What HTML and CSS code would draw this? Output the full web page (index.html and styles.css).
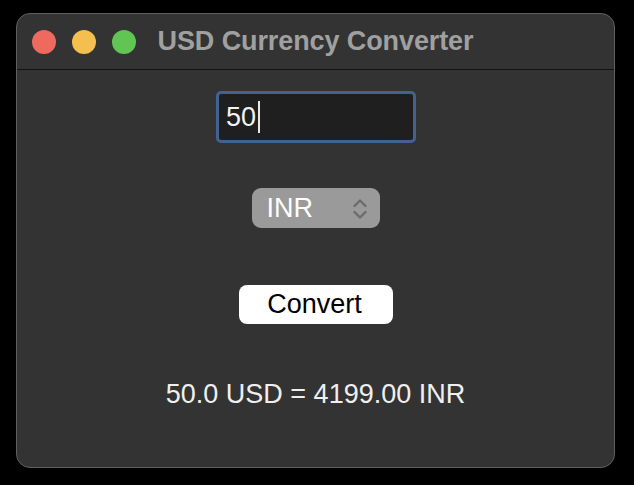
FILE: index.html
```html
<!DOCTYPE html>
<html lang="en">
<head>
<meta charset="utf-8">
<title>USD Currency Converter</title>
<link rel="stylesheet" href="styles.css">
</head>
<body>
<div class="window">
  <div class="titlebar">
    <div class="lights">
      <span class="light red"></span>
      <span class="light yellow"></span>
      <span class="light green"></span>
    </div>
    <div class="title">USD Currency Converter</div>
    <div class="spacer"></div>
  </div>
  <div class="content">
    <div class="field"><span class="value">50</span><span class="caret"></span></div>
    <div class="popup">
      <span class="popup-label">INR</span>
      <svg class="chevrons" width="14" height="22" viewBox="0 0 14 22">
        <polyline points="1.5,8 7,2.5 12.5,8" fill="none" stroke="#6c6c6c" stroke-width="2.4" stroke-linecap="round" stroke-linejoin="round"/>
        <polyline points="1.5,14 7,19.5 12.5,14" fill="none" stroke="#6c6c6c" stroke-width="2.4" stroke-linecap="round" stroke-linejoin="round"/>
      </svg>
    </div>
    <div class="button">Convert</div>
    <div class="result">50.0 USD = 4199.00 INR</div>
  </div>
</div>
</body>
</html>
```
FILE: styles.css
```css
html, body {
  margin: 0;
  padding: 0;
  background: #000;
}
body {
  width: 634px;
  height: 485px;
  overflow: hidden;
  font-family: "Liberation Sans", Arial, sans-serif;
}
.window {
  box-sizing: border-box;
  margin: 13px 0 0 16px;
  width: 599px;
  height: 455px;
  border: 1px solid #5f5f5f;
  border-radius: 14px;
  background: #333333;
  overflow: hidden;
}
.titlebar {
  height: 55px;
  border-bottom: 1px solid #121212;
  display: grid;
  grid-template-columns: 1fr auto 1fr;
  align-items: center;
}
.lights {
  display: flex;
  gap: 16px;
  padding-left: 15px;
  padding-top: 1px;
}
.light {
  width: 24px;
  height: 24px;
  border-radius: 50%;
  display: block;
}
.red { background: #ee6a5f; }
.yellow { background: #f5bf4f; }
.green { background: #61c554; }
.title {
  font-weight: bold;
  font-size: 27px;
  color: #a0a0a0;
  letter-spacing: -0.1px;
}
.content {
  display: flex;
  flex-direction: column;
  align-items: center;
  padding-top: 21px;
}
.field {
  box-sizing: border-box;
  width: 200px;
  height: 52px;
  border: 3.5px solid #43628f;
  border-radius: 5px;
  background: #1f1f1f;
  display: flex;
  align-items: center;
  padding-left: 7.5px;
  color: #f2f2f2;
  font-size: 27px;
}
.caret {
  display: block;
  width: 2px;
  height: 32px;
  background: #e8e8e8;
  margin-left: 2px;
}
.popup {
  box-sizing: border-box;
  margin-top: 45px;
  width: 128px;
  height: 40px;
  border-radius: 9px;
  background: #9a9a9a;
  display: flex;
  align-items: center;
  justify-content: space-between;
  padding: 0 13px 0 15px;
  color: #ffffff;
  font-size: 27px;
}
.chevrons {
  display: block;
  margin-top: 1px;
}
.button {
  box-sizing: border-box;
  margin-top: 57px;
  width: 154px;
  height: 39px;
  border-radius: 8px;
  background: #ffffff;
  color: #000;
  font-size: 27px;
  display: flex;
  align-items: center;
  justify-content: center;
  padding-right: 2px;
}
.result {
  margin-top: 54px;
  font-size: 27px;
  line-height: 32px;
  color: #efefef;
}
```
